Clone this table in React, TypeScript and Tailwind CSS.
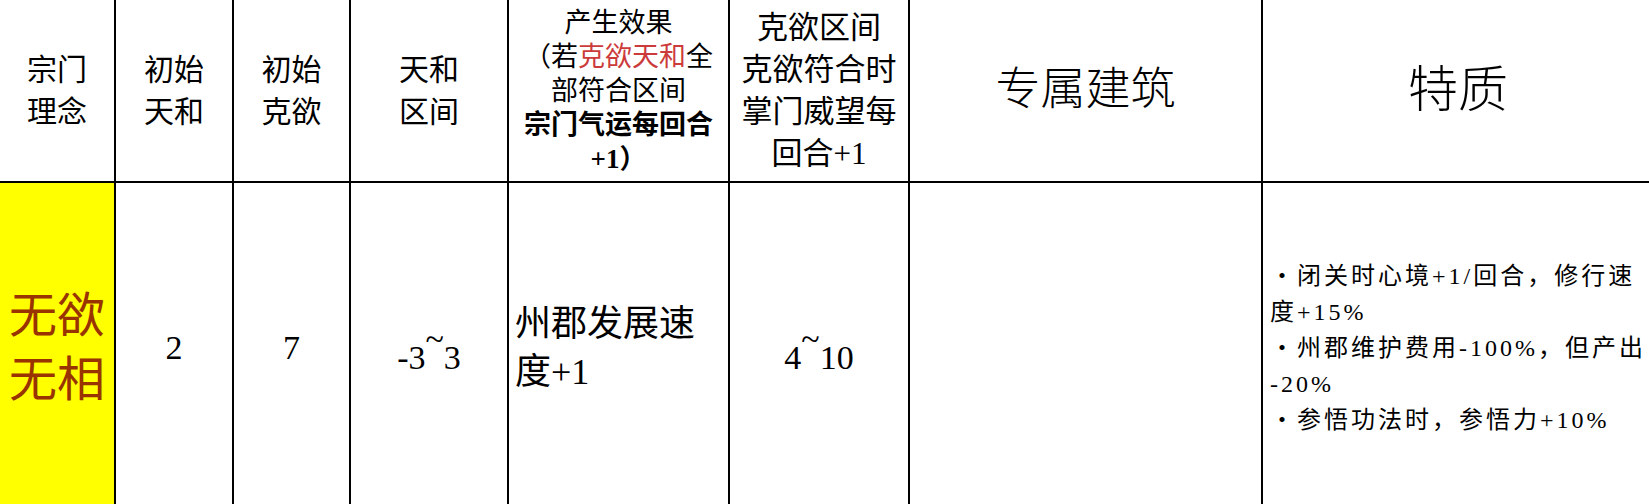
const font = "font-['Liberation_Serif','Noto_Sans_CJK_SC',sans-serif]";

function Cell({
  className = '',
  bg = 'bg-white',
  color = 'text-black',
  children,
}: {
  className?: string;
  bg?: string;
  color?: string;
  children?: React.ReactNode;
}) {
  return (
    <div className={`flex items-center justify-center text-center ${bg} ${color} ${className}`}>
      {children}
    </div>
  );
}

function Range({ from, to }: { from: string; to: string }) {
  return (
    <span className="text-[34px] leading-none">
      {from}
      <span className="align-[0.55em]">~</span>
      {to}
    </span>
  );
}

export default function App() {
  return (
    <div className={`h-[504px] w-[1649px] overflow-hidden bg-white ${font}`}>
      <div className="grid grid-cols-[114px_116px_115px_156px_219px_178px_351px_1fr] grid-rows-[181px_330px] gap-[2px] bg-black">
        {/* Header */}
        <Cell className="text-[30px] leading-[42px]">
          宗门<br />理念
        </Cell>
        <Cell className="text-[30px] leading-[42px]">
          初始<br />天和
        </Cell>
        <Cell className="text-[30px] leading-[42px]">
          初始<br />克欲
        </Cell>
        <Cell className="text-[30px] leading-[42px]">
          天和<br />区间
        </Cell>
        <Cell className="text-[27px] leading-[34px]">
          <div>
            <div>产生效果</div>
            <div>
              （若<span className="text-[#cc3b3b]">克欲天和</span>全
            </div>
            <div>部符合区间</div>
            <div className="font-bold">宗门气运每回合</div>
            <div className="font-bold">+1）</div>
          </div>
        </Cell>
        <Cell className="text-[31px] leading-[42px]">
          <div>
            <div>克欲区间</div>
            <div>克欲符合时</div>
            <div>掌门威望每</div>
            <div>回合+1</div>
          </div>
        </Cell>
        <Cell className="text-[45px] font-light">专属建筑</Cell>
        <Cell className="text-[50px] font-light">特质</Cell>

        {/* Row */}
        <Cell bg="bg-[#ffff00]" color="text-[#993300]" className="text-[48px] leading-[64px]">
          无欲<br />无相
        </Cell>
        <Cell>
          <span className="text-[34px] leading-none">2</span>
        </Cell>
        <Cell>
          <span className="text-[34px] leading-none">7</span>
        </Cell>
        <Cell>
          <Range from="-3" to="3" />
        </Cell>
        <Cell className="justify-start px-[6px] text-left text-[36px] leading-[48px]">
          州郡发展速度+1
        </Cell>
        <Cell>
          <Range from="4" to="10" />
        </Cell>
        <Cell />
        <Cell className="justify-start px-[7px] text-left">
          <ul className="whitespace-nowrap text-[24px] leading-[36px] tracking-[3px]">
            <li>
              ・闭关时心境+1/回合，修行速<br />度+15%
            </li>
            <li>
              ・州郡维护费用-100%，但产出<br />-20%
            </li>
            <li>・参悟功法时，参悟力+10%</li>
          </ul>
        </Cell>
      </div>
    </div>
  );
}
